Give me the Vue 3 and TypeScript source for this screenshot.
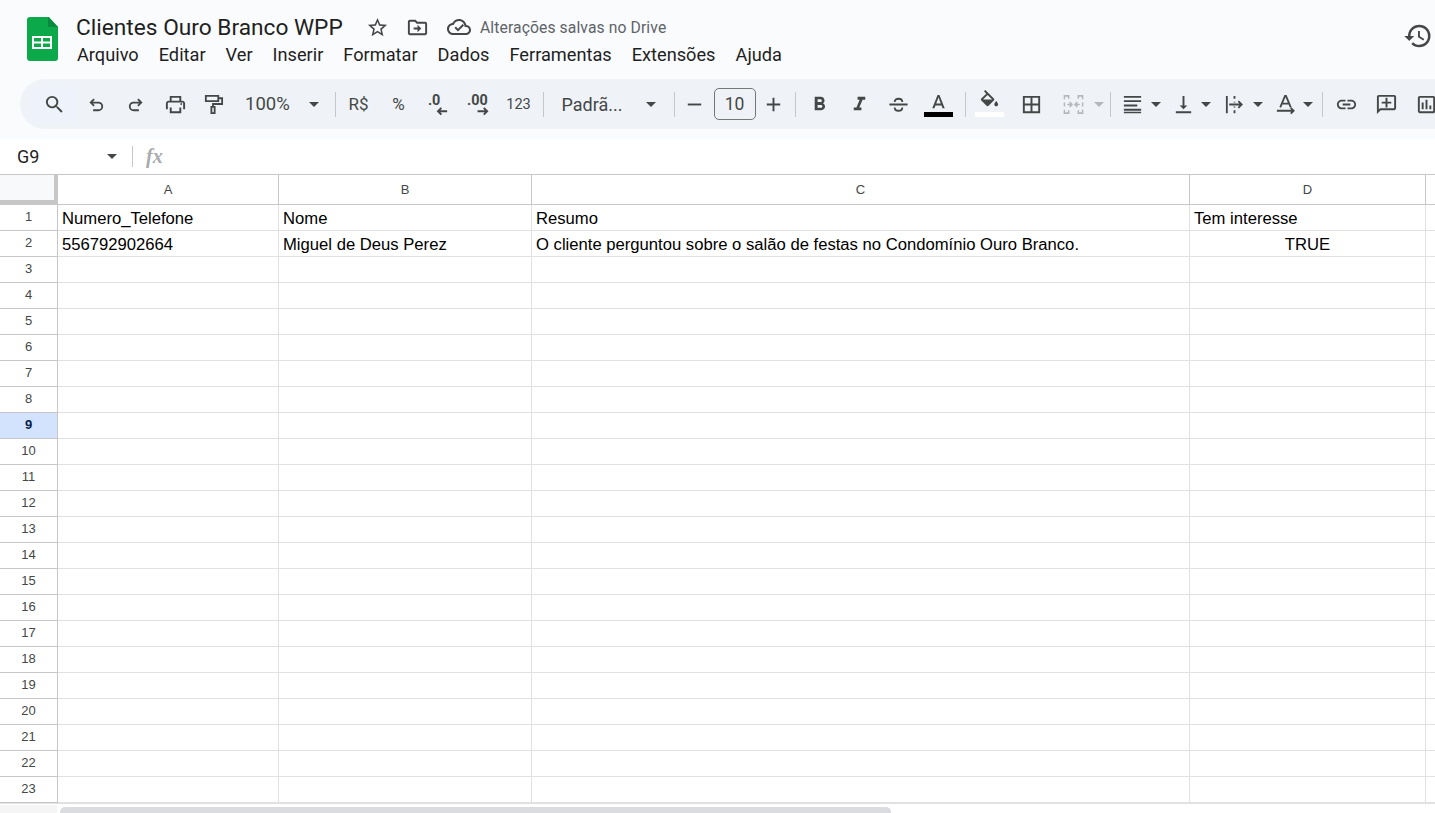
<script setup lang="ts">
const menus = ['Arquivo', 'Editar', 'Ver', 'Inserir', 'Formatar', 'Dados', 'Ferramentas', 'Extensões', 'Ajuda']
const columns = ['A', 'B', 'C', 'D']

const data: Record<number, string[]> = {
  1: ['Numero_Telefone', 'Nome', 'Resumo', 'Tem interesse'],
  2: [
    '556792902664',
    'Miguel de Deus Perez',
    'O cliente perguntou sobre o salão de festas no Condomínio Ouro Branco.',
    'TRUE',
  ],
}

const rows = Array.from({ length: 23 }, (_, i) => i + 1)

function cellText(row: number, col: number) {
  return data[row]?.[col] ?? ''
}
</script>

<template>
  <div class="sheet">
    <header class="top">
      <div class="title-bar">
        <svg class="logo" viewBox="0 0 31 44">
          <path d="M3 0h19l9 10v31a3 3 0 0 1-3 3H3a3 3 0 0 1-3-3V3a3 3 0 0 1 3-3z" fill="#0ca94b" />
          <path d="M21 0l10 10H21z" fill="#0a8a3e" />
          <path d="M5 19h20v13H5zm2 2v3.500h7V21zm9 0v3.500h7V21zm-9 5.500V30h7v-3.500zm9 0V30h7v-3.500z" fill="#fff" fill-rule="evenodd" />
        </svg>
        <div class="title-text">
          <div class="title-line">
            <span class="doc-name">Clientes Ouro Branco WPP</span>
            <svg class="i star" viewBox="0 0 24 24"><path d="M22 9.240l-7.190-.62L12 2 9.190 8.630 2 9.240l5.460 4.730L5.820 21 12 17.270 18.180 21l-1.630-7.030L22 9.240zM12 15.400l-3.760 2.270 1-4.280-3.320-2.880 4.380-.38L12 6.100l1.710 4.040 4.380.38-3.320 2.880 1 4.280L12 15.400z" /></svg>
            <svg class="i move" viewBox="0 0 24 24"><path d="M20 6h-8l-2-2H4c-1.100 0-2 .9-2 2v12c0 1.100.9 2 2 2h16c1.100 0 2-.9 2-2V8c0-1.100-.9-2-2-2zm0 12H4V6h5.170l2 2H20v10zm-8-4H8v-2h4V9l4 4-4 4v-3z" /></svg>
            <svg class="i cloud" viewBox="0 0 24 24"><path d="M19.350 10.040C18.670 6.590 15.640 4 12 4 9.110 4 6.600 5.640 5.350 8.040 2.340 8.360 0 10.910 0 14c0 3.310 2.690 6 6 6h13c2.760 0 5-2.240 5-5 0-2.640-2.050-4.780-4.650-4.960zM19 18H6c-2.210 0-4-1.790-4-4 0-2.050 1.530-3.760 3.560-3.970l1.070-.11.5-.95C8.080 7.140 9.940 6 12 6c2.620 0 4.880 1.860 5.390 4.430l.3 1.500 1.530.11c1.560.1 2.780 1.410 2.780 2.960 0 1.650-1.350 3-3 3zm-8-1.500l-3.500-3.500 1.410-1.410L11 13.670l4.600-4.600 1.410 1.410z" /></svg>
            <span class="saved">Alterações salvas no Drive</span>
          </div>
          <nav class="menu">
            <span v-for="m in menus" :key="m">{{ m }}</span>
          </nav>
        </div>
        <svg class="i history" viewBox="0 0 24 24"><path d="M13 3a9 9 0 0 0-9 9H1l3.890 3.890.07.14L9 12H6c0-3.870 3.130-7 7-7s7 3.130 7 7-3.130 7-7 7c-1.930 0-3.680-.79-4.940-2.060l-1.420 1.420A8.954 8.954 0 0 0 13 21a9 9 0 0 0 0-18zm-1 5v5l4.280 2.540.72-1.210-3.500-2.080V8H12z" /></svg>
      </div>

      <div class="toolbar">
        <div class="btn search">
          <svg class="i" viewBox="0 0 24 24"><path d="M15.500 14h-.79l-.28-.27A6.471 6.471 0 0 0 16 9.500 6.500 6.500 0 1 0 9.500 16c1.610 0 3.090-.59 4.230-1.570l.27.28v.79l5 4.990L20.490 19l-4.990-5zm-6 0C7.010 14 5 11.990 5 9.500S7.010 5 9.500 5 14 7.010 14 9.500 11.990 14 9.500 14z" /></svg>
        </div>
        <div class="btn w39"><svg class="i line" viewBox="0 0 24 24"><path d="M9.500 6.500 6 10l3.500 3.500M6 10h8a4 4 0 0 1 0 8H8.500" /></svg></div>
        <div class="btn w39"><svg class="i line" viewBox="0 0 24 24"><path d="M14.500 6.500 18 10l-3.500 3.500M18 10h-8a4 4 0 0 0 0 8h5.500" /></svg></div>
        <div class="btn w40"><svg class="i" viewBox="0 0 24 24"><path d="M19 8h-1V3H6v5H5c-1.660 0-3 1.340-3 3v6h4v4h12v-4h4v-6c0-1.660-1.340-3-3-3zM8 5h8v3H8V5zm8 14H8v-4h8v4zm2-2v-2H6v2H4v-6c0-.55.45-1 1-1h14c.55 0 1 .45 1 1v6h-2z" /><circle cx="18" cy="11.500" r="1" /></svg></div>
        <div class="btn w37"><svg class="i line" viewBox="0 0 24 24"><path d="M4 3h13v5.500H4zM17 5.500h4v6h-9.500V14M9.800 14.500h3.400v6.500H9.800z" /></svg></div>
        <div class="zoom-select">
          <span class="zoom-value">100%</span>
          <span class="caret" />
        </div>
        <span class="sep first" />
        <div class="btn w40 txt">R$</div>
        <div class="btn w40 txt">%</div>
        <div class="btn w40">
          <svg class="i" viewBox="0 0 24 24">
            <text x="1" y="13" class="dec">.0</text>
            <path d="M21 19h-9m3-3.500L11.500 19l3.500 3.500" fill="none" stroke="#444746" stroke-width="2" />
          </svg>
        </div>
        <div class="btn w40">
          <svg class="i" viewBox="0 0 24 24">
            <text x="0" y="13" class="dec">.00</text>
            <path d="M11 19h10m-3.500-3.500L21 19l-3.500 3.500" fill="none" stroke="#444746" stroke-width="2" />
          </svg>
        </div>
        <div class="btn w40 small">123</div>
        <span class="sep s2" />
        <div class="font-select">
          <span>Padrã...</span>
          <span class="caret" />
        </div>
        <span class="sep s3" />
        <div class="btn w39"><svg class="i" viewBox="0 0 24 24"><path d="M5 11h14v2H5z" /></svg></div>
        <div class="size-box">10</div>
        <div class="btn w36"><svg class="i" viewBox="0 0 24 24"><path d="M19 13h-6v6h-2v-6H5v-2h6V5h2v6h6v2z" /></svg></div>
        <span class="sep s4" />
        <div class="btn w40 after-sep"><svg class="i" viewBox="0 0 24 24"><path d="M15.600 10.790c.97-.67 1.650-1.770 1.650-2.790 0-2.260-1.750-4-4-4H7v14h7.040c2.090 0 3.710-1.700 3.710-3.790 0-1.520-.86-2.820-2.150-3.420zM10 6.500h3c.83 0 1.500.67 1.500 1.500s-.67 1.500-1.500 1.500h-3v-3zm3.500 9H10v-3h3.500c.83 0 1.500.67 1.500 1.500s-.67 1.500-1.500 1.500z" /></svg></div>
        <div class="btn w39"><svg class="i" viewBox="0 0 24 24"><path d="M10 4v3h2.210l-3.420 8H6v3h8v-3h-2.210l3.420-8H18V4z" /></svg></div>
        <div class="btn w40"><svg class="i line" viewBox="0 0 24 24"><path d="M2.500 12h19M8 9.500C8 7 9.800 6 12 6s4 1 4 3.500M8 15c0 2.200 1.800 3.500 4 3.500s4-1.300 4-3.500" /></svg></div>
        <div class="btn w40 color-btn">
          <svg class="i a-icon" viewBox="0 0 24 24"><path d="M11 3 5.500 17h2.250l1.120-3h6.250l1.120 3h2.250L13 3h-2zm-1.380 9L12 5.670 14.380 12H9.620z" /></svg>
          <span class="bar black" />
        </div>
        <span class="sep s5" />
        <div class="btn w40 after-sep color-btn">
          <svg class="i fill-icon" viewBox="0 0 24 24"><path d="M16.560 8.940 7.620 0 6.210 1.410l2.380 2.380-5.150 5.150c-.59.59-.59 1.540 0 2.120l5.500 5.500c.29.29.68.44 1.060.44s.77-.15 1.060-.44l5.500-5.500c.59-.58.59-1.530 0-2.120zM5.210 10 10 5.210 14.790 10H5.210zM19 11.500s-2 2.170-2 3.500c0 1.100.9 2 2 2s2-.9 2-2c0-1.330-2-3.500-2-3.500z" /></svg>
          <span class="bar white" />
        </div>
        <div class="btn w40 ml2"><svg class="i" viewBox="0 0 24 24"><path d="M3 3v18h18V3H3zm8 16H5v-6h6v6zm0-8H5V5h6v6zm8 8h-6v-6h6v6zm0-8h-6V5h6v6z" /></svg></div>
        <div class="btn w40 ml2"><svg class="i line off" viewBox="0 0 24 24"><path d="M7 6V3H2.500v3.500M2.500 10v4M2.500 17.500V21H7v-3M17 6V3h4.500v3.500M21.500 10v4M21.500 17.500V21H17v-3M5.500 12h4.500M8 9.500l2.500 2.500L8 14.500M18.500 12H14M16 9.500 13.500 12l2.500 2.500" /></svg></div>
        <div class="btn w10"><span class="caret off" /></div>
        <span class="sep s6" />
        <div class="btn w32 ml6"><svg class="i" viewBox="0 0 24 24"><path d="M3 3h18v2H3zM3 7.500h18v2H3zM3 12h14v2H3zM3 16.500h18v2H3zM3 21h18v-1.500H3z" /></svg></div>
        <div class="btn w14"><span class="caret" /></div>
        <div class="btn w32 ml5"><svg class="i" viewBox="0 0 24 24"><path d="M16 13h-3V3h-2v10H8l4 4 4-4zM4 19v2h16v-2H4z" /></svg></div>
        <div class="btn w12"><span class="caret" /></div>
        <div class="btn w32 ml7"><svg class="i line" viewBox="0 0 24 24"><path d="M4 3v18M12 3v3M12 18v3M12 9v1M12 14v1M6.500 12h13M16 8.500l3.500 3.500-3.500 3.500" /></svg></div>
        <div class="btn w14"><span class="caret" /></div>
        <div class="btn w32 ml5"><svg class="i line" viewBox="0 0 24 24"><path d="M6.500 15 11.500 3h1l5 12M8.500 11h7M3 18.500h17M17.500 15.500l3 3-3 3" /></svg></div>
        <div class="btn w12"><span class="caret" /></div>
        <span class="sep s7" />
        <div class="btn w40 ml4"><svg class="i" viewBox="0 0 24 24"><path d="M3.900 12c0-1.710 1.390-3.100 3.100-3.100h4V7H7c-2.760 0-5 2.240-5 5s2.240 5 5 5h4v-1.900H7c-1.710 0-3.100-1.390-3.100-3.100zM8 13h8v-2H8v2zm9-6h-4v1.900h4c1.710 0 3.100 1.390 3.100 3.100s-1.390 3.100-3.100 3.100h-4V17h4c2.760 0 5-2.240 5-5s-2.240-5-5-5z" /></svg></div>
        <div class="btn w40"><svg class="i" viewBox="0 0 24 24"><path transform="matrix(-1 0 0 1 24 0)" d="M22 4c0-1.100-.9-2-2-2H4c-1.100 0-2 .9-2 2v12c0 1.100.9 2 2 2h14l4 4V4zm-2 13.170L18.830 16H4V4h16v13.170zM13 5h-2v4H7v2h4v4h2v-4h4V9h-4V5z" /></svg></div>
        <div class="btn w40"><svg class="i" viewBox="0 0 24 24"><path d="M9 17H7v-7h2v7zm4 0h-2V7h2v10zm4 0h-2v-4h2v4zm2 2H5V5h14v14zm0-16H5c-1.100 0-2 .9-2 2v14c0 1.100.9 2 2 2h14c1.100 0 2-.9 2-2V5c0-1.100-.9-2-2-2z" /></svg></div>
      </div>
    </header>

    <div class="formula-bar">
      <span class="name-box">G9</span>
      <span class="caret name-caret" />
      <span class="fx-sep" />
      <span class="fx">fx</span>
    </div>

    <div class="grid">
      <div class="grid-row head">
        <div class="corner" />
        <div v-for="c in columns" :key="c" class="col-head">{{ c }}</div>
        <div class="col-head last" />
      </div>
      <div v-for="r in rows" :key="r" class="grid-row">
        <div class="row-head" :class="{ active: r === 9 }">{{ r }}</div>
        <div
          v-for="(c, i) in columns"
          :key="c"
          class="cell"
          :class="{ center: cellText(r, i) === 'TRUE' }"
        >
          {{ cellText(r, i) }}
        </div>
        <div class="cell last" />
      </div>
    </div>

    <div class="scroll-strip">
      <div class="scroll-corner" />
      <div class="scroll-thumb" />
    </div>
  </div>
</template>

<style scoped>
.sheet {
  width: 1435px;
  height: 813px;
  overflow: hidden;
  background: #fff;
  display: flex;
  flex-direction: column;
  font-family: Roboto, "Liberation Sans", sans-serif;
}

.top {
  height: 139px;
  flex: none;
  background: #f9fbfd;
  box-sizing: border-box;
}

.title-bar {
  height: 79px;
  display: flex;
  align-items: flex-start;
  padding-left: 27px;
  box-sizing: border-box;
}

.logo {
  width: 31px;
  height: 44px;
  margin-top: 17px;
  flex: none;
}

.title-text {
  margin-left: 19px;
  padding-top: 12px;
}

.title-line {
  display: flex;
  align-items: center;
  height: 30px;
}

.doc-name {
  font-size: 22.7px;
  color: #1f1f1f;
  width: 290px;
  margin-left: -1px;
  white-space: nowrap;
}

.saved {
  font-size: 15.7px;
  color: #5f6368;
  margin-left: 9px;
  white-space: nowrap;
  letter-spacing: 0.1px;
}

.menu {
  display: flex;
  gap: 20px;
  font-size: 18.2px;
  line-height: 26px;
  color: #1f1f1f;
  white-space: nowrap;
}

.i {
  width: 23px;
  height: 23px;
  fill: #444746;
  flex: none;
}

.line {
  fill: none;
  stroke: #444746;
  stroke-width: 1.900;
}

.line.off {
  stroke: #b5b8bb;
  stroke-width: 1.600;
}

.move {
  margin-left: 17px;
}

.cloud {
  margin-left: 18px;
  width: 24px;
  height: 24px;
}

.history {
  width: 30px;
  height: 30px;
  margin-left: auto;
  margin-top: 21px;
  margin-right: 2px;
}

.toolbar {
  height: 50px;
  margin-left: 20px;
  width: 1450px;
  padding-left: 11px;
  box-sizing: border-box;
  background: #eff3f8;
  border-radius: 25px;
  display: flex;
  align-items: center;
  color: #444746;
}

.btn {
  flex: none;
  height: 36px;
  display: flex;
  align-items: center;
  justify-content: center;
}

.search {
  width: 46px;
  height: 35px;
  background: #edf2fb;
}

.w10 { width: 10px; }
.w12 { width: 12px; }
.w14 { width: 14px; }
.w32 { width: 32px; }
.w36 { width: 36px; }
.w37 { width: 37px; }
.w39 { width: 39px; }
.w40 { width: 40px; }

.ml2 { margin-left: 2px; }
.ml4 { margin-left: 4px; }
.ml5 { margin-left: 5px; }
.ml6 { margin-left: 6px; }
.ml7 { margin-left: 7px; }

.txt {
  font-size: 17px;
}

.small {
  font-size: 14.5px;
}

.dec {
  font: 700 15px Roboto, sans-serif;
  fill: #444746;
}

.caret {
  display: inline-block;
  width: 0;
  height: 0;
  border-left: 5.5px solid transparent;
  border-right: 5.5px solid transparent;
  border-top: 5.5px solid #444746;
}

.caret.off {
  border-top-color: #b5b8bb;
}

.zoom-select {
  width: 93px;
  padding-left: 13px;
  padding-right: 6px;
  box-sizing: border-box;
  display: flex;
  align-items: center;
  justify-content: space-between;
  font-size: 18.5px;
}

.font-select {
  width: 114px;
  padding-left: 16px;
  padding-right: 4px;
  box-sizing: border-box;
  display: flex;
  align-items: center;
  justify-content: space-between;
  font-size: 18px;
}

.sep {
  flex: none;
  width: 1px;
  height: 25px;
  background: #c7c7c7;
}

.first { margin: 0 2.500px 0 10px; }
.s2 { margin: 0 2px 0 4px; }
.s3 { margin: 0 0 0 14px; }
.s4 { margin: 0 0 0 3px; }
.s5 { margin: 0 0 0 6px; }
.s6 { margin: 0 0 0 6px; }
.s7 { margin: 0 0 0 8px; }

.after-sep {
  margin-left: 4px;
}

.size-box {
  width: 42px;
  height: 32px;
  box-sizing: border-box;
  border: 1px solid #747775;
  border-radius: 5px;
  display: flex;
  align-items: center;
  justify-content: center;
  font-size: 17.5px;
}

.color-btn {
  flex-direction: column;
  justify-content: flex-start;
}

.a-icon {
  margin-top: 6px;
}

.fill-icon {
  margin-top: 4px;
}

.bar {
  width: 29px;
  height: 5px;
  flex: none;
}

.black {
  background: #000;
  margin-top: -3px;
}

.white {
  background: #fff;
  margin-top: -1px;
}

.formula-bar {
  height: 35px;
  flex: none;
  display: flex;
  align-items: center;
  background: #fff;
}

.name-box {
  margin-left: 17px;
  width: 90px;
  font-size: 18px;
  color: #1f1f1f;
}

.fx-sep {
  width: 1px;
  height: 21px;
  background: #c7c7c7;
  margin-left: 15px;
}

.fx {
  margin-left: 13px;
  font: italic 700 20px "Liberation Serif", serif;
  color: #a9abad;
}

.grid {
  flex: none;
  border-top: 1px solid #c7c7c7;
}

.grid-row {
  display: grid;
  grid-template-columns: 58px 221px 253px 658px 236px 1fr;
  height: 26px;
}

.grid-row.head {
  height: 30px;
}

.corner {
  background: #f8f9fa;
  border-right: 4px solid #c7c7c7;
  border-bottom: 5px solid #c7c7c7;
}

.col-head {
  border-right: 1px solid #c7c7c7;
  border-bottom: 1px solid #c7c7c7;
  display: flex;
  align-items: center;
  justify-content: center;
  font: 13px "Liberation Sans", Arial, sans-serif;
  color: #444746;
}

.row-head {
  border-right: 1px solid #c7c7c7;
  border-bottom: 1px solid #c7c7c7;
  display: flex;
  align-items: center;
  justify-content: center;
  padding-bottom: 3px;
  box-sizing: border-box;
  font: 13px "Liberation Sans", Arial, sans-serif;
  color: #444746;
}

.row-head.active {
  background: #d3e3fd;
  color: #041e49;
  font-weight: 700;
}

.cell {
  border-right: 1px solid #e1e1e1;
  border-bottom: 1px solid #e1e1e1;
  padding: 0 4px;
  font: 16.650px/27px "Liberation Sans", Arial, sans-serif;
  color: #000;
  white-space: nowrap;
  overflow: hidden;
  box-sizing: border-box;
}

.center {
  text-align: center;
}

.last {
  border-right: none;
}

.scroll-strip {
  flex: 1;
  display: flex;
  border-top: 1px solid #e1e1e1;
  padding-top: 1px;
}

.scroll-corner {
  width: 57px;
  background: #f5f5f5;
}

.scroll-thumb {
  width: 831px;
  height: 12px;
  margin: 2px 0 0 3px;
  border-radius: 5px 5px 0 0;
  background: #dadce0;
}
</style>

<style>
html,
body {
  margin: 0;
  overflow: hidden;
}
</style>
